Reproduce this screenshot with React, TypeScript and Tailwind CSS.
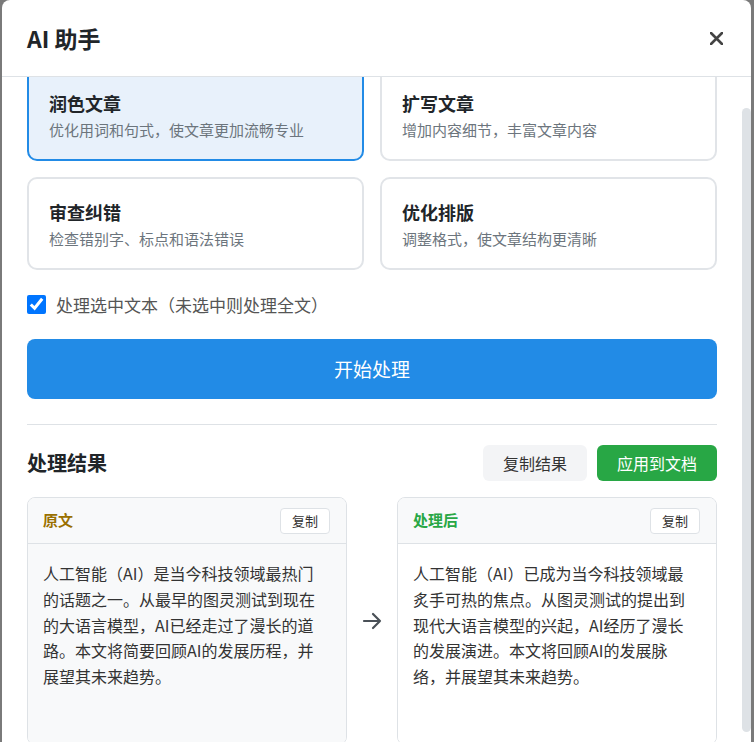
import React from 'react';

interface Mode {
  title: string;
  desc: string;
}

const modes: Mode[] = [
  { title: '润色文章', desc: '优化用词和句式，使文章更加流畅专业' },
  { title: '扩写文章', desc: '增加内容细节，丰富文章内容' },
  { title: '审查纠错', desc: '检查错别字、标点和语法错误' },
  { title: '优化排版', desc: '调整格式，使文章结构更清晰' },
];

const original =
  '人工智能（AI）是当今科技领域最热门的话题之一。从最早的图灵测试到现在的大语言模型，AI已经走过了漫长的道路。本文将简要回顾AI的发展历程，并展望其未来趋势。';
const processed =
  '人工智能（AI）已成为当今科技领域最炙手可热的焦点。从图灵测试的提出到现代大语言模型的兴起，AI经历了漫长的发展演进。本文将回顾AI的发展脉络，并展望其未来趋势。';

const ResultPanel: React.FC<{ label: string; labelClass: string; text: string; bodyClass: string }> = ({
  label,
  labelClass,
  text,
  bodyClass,
}) => (
  <div className="flex-1 h-[248px] flex flex-col border border-[#dee2e6] rounded-lg overflow-hidden">
    <div className="h-[46px] shrink-0 flex items-center justify-between pl-[15px] pr-4 bg-[#f8f9fa] border-b border-[#dee2e6]">
      <span className={`text-[15px] font-bold ${labelClass}`}>{label}</span>
      <button className="h-[26px] px-[11px] text-[13px] text-[#333] bg-white border border-[#dee2e6] rounded">
        复制
      </button>
    </div>
    <div className={`flex-1 pl-[15px] pt-[17px] ${bodyClass}`}>
      <p className="max-w-[280px] text-base leading-[25.8px] text-[#333]">{text}</p>
    </div>
  </div>
);

export default function App() {
  return (
    <div className="h-screen overflow-hidden bg-[#7a7a7a] font-['Noto_Sans_CJK_SC','Noto_Sans',sans-serif] [text-spacing-trim:space-all]">
      <div className="relative ml-[2px] w-[749px] bg-white rounded-t-lg flex flex-col">
        <div className="h-[77px] shrink-0 flex items-center justify-between pl-[25px] pr-[28px] border-b border-[#dee2e6]">
          <h2 className="text-[23px] font-semibold text-[#212529]">AI 助手</h2>
          <button className="text-[#444]">
            <svg width="13" height="13" viewBox="0 0 13 13">
              <path d="M1 1L12 12M12 1L1 12" stroke="currentColor" strokeWidth="2.6" strokeLinecap="round" />
            </svg>
          </button>
        </div>

        <div
          ref={(el) => {
            if (el) el.scrollTop = 33;
          }}
          className="h-[673px] overflow-y-auto pl-[25px] pr-[34px] pt-6 pb-6"
        >
          <div className="grid grid-cols-2 gap-4">
            {modes.map((m, i) => (
              <div
                key={m.title}
                className={`h-[93px] rounded-[10px] border-2 px-5 pt-[20px] ${
                  i === 0 ? 'border-[#228be6] bg-[#e8f1fb]' : 'border-[#e1e4e8] bg-white'
                }`}
              >
                <div className="text-[18px] font-bold leading-[26px] text-[#212529]">{m.title}</div>
                <div className="mt-[3px] text-[15px] leading-[22px] text-[#6c757d]">{m.desc}</div>
              </div>
            ))}
          </div>

          <label className="mt-[22px] flex items-center gap-[10px] h-[25px]">
            <input type="checkbox" defaultChecked className="w-[19px] h-[19px] m-0" />
            <span className="text-[17px] text-[#555]">处理选中文本（未选中则处理全文）</span>
          </label>

          <button className="mt-[22px] w-full h-[60px] rounded-lg bg-[#228be6] text-white text-[19px]">
            开始处理
          </button>

          <div className="mt-[25px] border-t border-[#dee2e6] pt-5">
            <div className="flex items-center justify-between h-9">
              <h3 className="text-[20px] font-bold text-[#212529]">处理结果</h3>
              <div className="flex gap-[10px]">
                <button className="h-9 px-5 rounded-md bg-[#f3f4f6] text-base text-[#333]">复制结果</button>
                <button className="h-9 px-5 rounded-md bg-[#28a745] text-base text-white">应用到文档</button>
              </div>
            </div>

            <div className="mt-4 flex items-center gap-[15px]">
              <ResultPanel label="原文" labelClass="text-[#9a7000]" text={original} bodyClass="bg-[#f8f9fa]" />
              <svg width="20" height="20" viewBox="0 0 20 20" className="shrink-0 text-[#495057]">
                <path
                  d="M2 10H18M11 3L18 10L11 17"
                  fill="none"
                  stroke="currentColor"
                  strokeWidth="2.2"
                  strokeLinecap="round"
                  strokeLinejoin="round"
                />
              </svg>
              <ResultPanel label="处理后" labelClass="text-[#28a745]" text={processed} bodyClass="bg-white" />
            </div>
          </div>
        </div>

        {/* overlay scrollbar thumb */}
        <div className="absolute left-[740px] top-[108px] w-[9px] h-[624px] rounded-full bg-[#dee2e6]" />
      </div>
    </div>
  );
}
